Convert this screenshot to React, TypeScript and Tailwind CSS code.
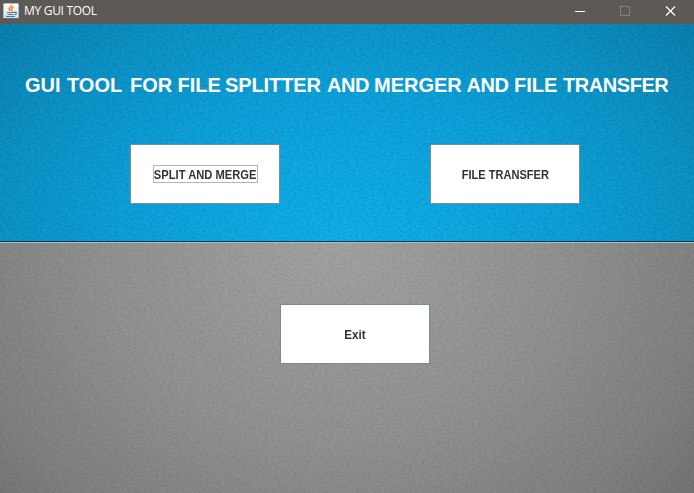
import type { ReactNode } from "react";

function JavaIcon() {
  return (
    <svg width="16" height="16" viewBox="0 0 16 16" className="shrink-0">
      <defs>
        <linearGradient id="tile" x1="0" y1="0" x2="0" y2="1">
          <stop offset="0" stopColor="#ffffff" />
          <stop offset="1" stopColor="#d3dde4" />
        </linearGradient>
      </defs>
      <rect x="0.5" y="0.5" width="15" height="15" rx="1" fill="url(#tile)" stroke="#a9bccb" />
      <path d="M1 15.5H15" stroke="#4a7492" />
      <path d="M8.800 1.500c.6 2-3.200 2.600-2.600 4.800.2.800.8 1.200 1.300 1.700M10.500 4c-2.600 1.200-2.300 2-1.600 3 .3.500.1.800-.2 1.200" fill="none" stroke="#ee8524" strokeWidth="1.500" />
      <path d="M4 9.500h7.500M4.500 11.500h6M3 13.500h9M11.500 9.300c2.600-.7 2.400 1.700 0 2.400" fill="none" stroke="#4a7a9c" strokeWidth="1.200" />
    </svg>
  );
}

function TitleBar() {
  return (
    <header className="flex h-6 shrink-0 items-start bg-[#5d5955] pr-px pl-[3px]">
      <div className="pt-[3px]">
        <JavaIcon />
      </div>
      <span className="ml-[5px] pt-[3px] font-['Open_Sans','Noto_Sans',sans-serif] text-[12px] leading-4 tracking-[-0.3px] text-white">
        MY GUI TOOL
      </span>
      <div className="ml-auto flex">
        <svg width="45" height="24" viewBox="0 0 45 24" fill="none">
          <path d="M17 11.500h10" stroke="#fff" />
        </svg>
        <svg width="45" height="24" viewBox="0 0 45 24" fill="none">
          <rect x="17.500" y="6.500" width="9" height="9" stroke="#85817e" />
        </svg>
        <svg width="45" height="24" viewBox="0 0 45 24" fill="none">
          <path d="M18 6.500l9 9M27 6.500l-9 9" stroke="#fff" strokeWidth="1.200" />
        </svg>
      </div>
    </header>
  );
}

function Grain({ id, opacity }: { id: string; opacity: number }) {
  return (
    <svg className="pointer-events-none absolute inset-0 h-full w-full" aria-hidden="true">
      <filter id={id} x="0" y="0" width="100%" height="100%" colorInterpolationFilters="sRGB">
        <feTurbulence type="fractalNoise" baseFrequency="0.32 0.52" numOctaves="2" seed="4" />
        <feColorMatrix values="0 0 0 0 0  0 0 0 0 0  0 0 0 0 0  3 0 0 0 -1.100" />
      </filter>
      <rect width="100%" height="100%" filter={`url(#${id})`} opacity={opacity} />
    </svg>
  );
}

type ButtonProps = { children: ReactNode; scale?: string; focused?: boolean };

function Button({ children, scale = "", focused = false }: ButtonProps) {
  return (
    <button className="flex h-[60px] w-[150px] items-center justify-center border border-[#7a8a99] bg-white text-[12px] leading-4 font-bold text-[#333333]">
      <span
        className={`flex h-[18px] items-center justify-center border pt-[2px] whitespace-nowrap ${
          focused ? "w-[105px] border-[#a3b8cc] pl-px" : "border-transparent"
        }`}
      >
        <span className={`inline-block ${scale}`}>{children}</span>
      </span>
    </button>
  );
}

const HEADING = [
  { text: "GUI", style: "w-[42px]" },
  { text: "TOOL", style: "w-[63px]" },
  { text: "FOR", style: "w-[47.5px]" },
  { text: "FILE", style: "w-[47.5px]" },
  { text: "SPLITTER", style: "w-[102px] tracking-[-0.1px]" },
  { text: "AND", style: "w-[47px] tracking-[-0.5px]" },
  { text: "MERGER", style: "w-[92.5px]" },
  { text: "AND", style: "w-[47.5px] tracking-[-0.5px]" },
  { text: "FILE", style: "w-[49px]" },
  { text: "TRANSFER", style: "w-[110px] tracking-[-0.45px]" },
];

export default function App() {
  return (
    <div className="flex h-[493px] w-[694px] flex-col overflow-hidden font-['Liberation_Sans',Arial,sans-serif]">
      <TitleBar />
      <section className="relative h-[219px] shrink-0 border-b border-[#b8bcbe] bg-[radial-gradient(ellipse_490px_340px_at_50%_100%,#10b0eb_0%,#0da1da_45%,#0c90c3_75%,#097ca9_100%)]">
        <Grain id="grain-blue" opacity={0.065} />
        <div className="relative flex h-[218px] flex-col border-b border-[#06364b]">
          <h1 className="flex pt-[49px] pl-[25px] text-[20px] leading-6 font-bold whitespace-nowrap text-white">
            {HEADING.map((word, i) => (
              <span key={i} className={`shrink-0 ${word.style}`}>
                {word.text}{" "}
              </span>
            ))}
          </h1>
          <div className="mt-[47px] flex gap-[150px] pl-[130px]">
            <Button scale="scale-x-[0.93]" focused>
              SPLIT AND MERGE
            </Button>
            <Button scale="scale-x-[0.92]">FILE TRANSFER</Button>
          </div>
        </div>
      </section>
      <section className="relative flex-1 bg-[radial-gradient(ellipse_490px_420px_at_48%_0%,#a3a2a2_0%,#939292_45%,#838282_75%,#706f6f_100%)]">
        <Grain id="grain-grey" opacity={0.045} />
        <div className="relative flex pt-[61px] pl-[280px]">
          <Button scale="scale-x-[0.97]">Exit</Button>
        </div>
      </section>
    </div>
  );
}
